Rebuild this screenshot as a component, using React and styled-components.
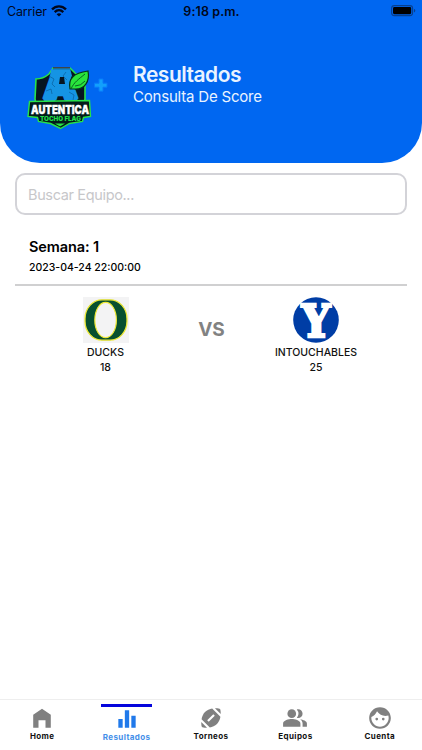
import React from 'react';
import styled, { createGlobalStyle } from 'styled-components';
import { MdEqualizer, MdFace, MdPeopleAlt, MdSportsFootball } from 'react-icons/md';

const tabs = [
  { name: 'Home', icon: HomeIcon },
  { name: 'Resultados', icon: MdEqualizer, active: true },
  { name: 'Torneos', icon: MdSportsFootball },
  { name: 'Equipos', icon: MdPeopleAlt },
  { name: 'Cuenta', icon: MdFace },
];

function HomeIcon({ size }) {
  return (
    <svg width={size} height={size} viewBox="0 0 26 26" fill="currentColor">
      <path d="M13 3.7l8.8 6v13.1h-5.3v-7.6H9.5v7.6H4.2V9.7z" />
    </svg>
  );
}

function WifiIcon() {
  return (
    <svg width="16" height="12" viewBox="0 0 16 12" fill="none" stroke="#00071c" strokeWidth="2.3">
      <path d="M1 4.4C5 .3 11 .3 15 4.4" />
      <path d="M3.7 7.1c2.5-2.5 6.1-2.5 8.6 0" />
      <path d="M8 11.6L5.6 9.2c1.4-1.3 3.4-1.3 4.8 0z" fill="#00071c" stroke="none" />
    </svg>
  );
}

function BatteryIcon() {
  return (
    <svg width="25" height="12" viewBox="0 0 25 12">
      <rect x=".6" y=".6" width="21" height="10" rx="2.8" fill="none" stroke="#07408f" strokeWidth="1.1" />
      <rect x="2" y="2" width="18.2" height="7.2" rx="1.4" fill="#000" />
      <path d="M23 4v3.4q1.3-.4 1.3-1.7T23 4z" fill="#07408f" />
    </svg>
  );
}

function LeagueLogo() {
  return (
    <svg width="105" height="85" viewBox="0 0 105 85">
      <path d="M21 24q7 0 13-5l4-6h17l5 5q6 5 10 6v20q-2 16-25 28-23-12-25-28z" fill="#061521" stroke="#27e34a" strokeWidth="1.6" />
      <text x="45.5" y="44" textAnchor="middle" textLength="33" lengthAdjust="spacingAndGlyphs" fontFamily="Inter, sans-serif" fontSize="39" fontWeight="900" fill="#1594e4" stroke="#1594e4" strokeWidth="5" strokeLinejoin="bevel">A</text>
      <path d="M36 14l19-1 2 8-4 5H38l-3-4z" fill="#1594e4" />
      <path d="M38 14h17M34 21l5 3-2 5 3 3M31 36l5-2 1 5M51 17l-3 4 4 4M54 37l5 3-1 5" fill="none" stroke="#0a5f9c" strokeWidth=".7" />
      <path d="M45 22h4l1 7h-6z" fill="#061521" />
      <path d="M38 12.7h17" stroke="#433744" strokeWidth="1.2" />
      <path d="M55 34c-2-10 3-16 18-18 2 10-3 19-14 18z" fill="#29e43c" stroke="#04351c" strokeWidth="1.2" />
      <path d="M56 34c3-7 8-10 14-15M60 31q6 0 10-5" fill="none" stroke="#04541f" strokeWidth=".9" />
      <path d="M14.500 46.500l60-1 1 16-7 1-1 4-13 2-9 5-10-5-12-2-1-4-9.500-1z" fill="#031b1b" stroke="#27e34a" strokeWidth="1.4" />
      <text x="45" y="59.3" textAnchor="middle" textLength="58" lengthAdjust="spacingAndGlyphs" fontFamily="Inter, sans-serif" fontSize="12" fontWeight="900" fill="#fff" stroke="#fff" strokeWidth=".35">AUTENTICA</text>
      <text x="45.5" y="66" textAnchor="middle" textLength="41" lengthAdjust="spacingAndGlyphs" fontFamily="Inter, sans-serif" fontSize="6.2" fontWeight="900" fill="#20dd47">TOCHO FLAG</text>
      <path d="M40 68.500h10l-5 3z" fill="#27e34a" />
      <path d="M84 24h4v4.200h4v4h-4v4h-4v-4h-4.500v-4H84z" fill="#12a0fc" stroke="#087afa" strokeWidth="1" />
    </svg>
  );
}

function DucksLogo() {
  return (
    <svg width="46" height="46" viewBox="0 0 46 46">
      <rect width="46" height="46" fill="#f3f3f4" />
      <rect x="2" y="2.8" width="42" height="40.4" rx="17" ry="19" fill="#07502f" stroke="#eee936" strokeWidth="1.3" />
      <ellipse cx="22.6" cy="23" rx="10.8" ry="17.7" fill="#f3f3f4" stroke="#eee936" strokeWidth="1.2" />
    </svg>
  );
}

function IntouchablesLogo() {
  return (
    <svg width="46" height="46" viewBox="0 0 46 46" overflow="visible">
      <circle cx="23" cy="23" r="22.8" fill="#003da5" />
      <text x="23" y="39.6" textAnchor="middle" textLength="29" lengthAdjust="spacingAndGlyphs" fontFamily="DejaVu Serif, serif" fontSize="45" fontWeight="700" fill="#fff" stroke="#fff" strokeWidth="2.6">Y</text>
    </svg>
  );
}

function App() {
  return (
    <Screen>
      <GlobalStyle />
      <Header>
        <StatusBar>
          <Carrier>
            Carrier <WifiIcon />
          </Carrier>
          <Clock>9:18 p.m.</Clock>
          <Battery>
            <BatteryIcon />
          </Battery>
        </StatusBar>
        <Brand>
          <LeagueLogo />
          <Heading>
            <Title>Resultados</Title>
            <Subtitle>Consulta De Score</Subtitle>
          </Heading>
        </Brand>
      </Header>
      <Content>
        <Search type="text" placeholder="Buscar Equipo..." />
        <Week>
          <WeekTitle>Semana: 1</WeekTitle>
          <WeekDate>2023-04-24 22:00:00</WeekDate>
        </Week>
        <Match>
          <Team>
            <DucksLogo />
            <TeamText>DUCKS</TeamText>
            <TeamText>18</TeamText>
          </Team>
          <Versus>VS</Versus>
          <Team>
            <IntouchablesLogo />
            <TeamText>INTOUCHABLES</TeamText>
            <TeamText>25</TeamText>
          </Team>
        </Match>
      </Content>
      <TabBar>
        {tabs.map(({ name, icon: Icon, active }) => (
          <Tab key={name} $active={active}>
            <Icon size={26} />
            <TabLabel $active={active}>{name}</TabLabel>
          </Tab>
        ))}
      </TabBar>
    </Screen>
  );
}

const GlobalStyle = createGlobalStyle`
  * {
    box-sizing: border-box;
  }

  body {
    margin: 0;
    background-color: #fff;
    font-family: Inter, "Liberation Sans", sans-serif;
  }
`;

const Screen = styled.div`
  display: flex;
  flex-direction: column;
  height: 750px;
  overflow: hidden;
  background-color: #fff;
`;

const Header = styled.header`
  flex: none;
  height: 163px;
  background-color: #0067f1;
  border-radius: 0 0 40px 40px;
`;

const StatusBar = styled.div`
  display: grid;
  grid-template-columns: 1fr auto 1fr;
  align-items: center;
  height: 22px;
  padding: 0 6px 0 7px;
  color: #00071c;
  font-size: 12.5px;
`;

const Carrier = styled.div`
  display: flex;
  align-items: center;
  gap: 4px;
  letter-spacing: -0.15px;
`;

const Clock = styled.div`
  font-weight: 600;
  letter-spacing: 0.1px;
`;

const Battery = styled.div`
  display: flex;
  justify-content: flex-end;
`;

const Brand = styled.div`
  display: flex;
  gap: 13px;
  padding: 33px 0 0 15px;
`;

const Heading = styled.div`
  padding-top: 7px;
  color: #e9f3ff;
`;

const Title = styled.h1`
  margin: 0;
  font-size: 21px;
  line-height: 25px;
  font-weight: 600;
  letter-spacing: -0.5px;
`;

const Subtitle = styled.div`
  font-size: 15px;
  line-height: 20px;
  letter-spacing: -0.2px;
`;

const Content = styled.main`
  flex: 1;
  padding: 10px 15px 0;
`;

const Search = styled.input`
  display: block;
  width: 100%;
  height: 42px;
  padding: 0 11px;
  border: 2px solid #d3d3d8;
  border-radius: 10px;
  background-color: #fff;
  font-family: inherit;
  font-size: 14.5px;
  letter-spacing: -0.35px;
  outline: none;

  &::placeholder {
    color: #c7c7ca;
    opacity: 1;
  }
`;

const Week = styled.div`
  height: 71px;
  padding: 23px 14px 0;
  border-bottom: 2px solid #d0d0d1;
  color: #000;
`;

const WeekTitle = styled.div`
  font-size: 14.5px;
  line-height: 18px;
  font-weight: 600;
  letter-spacing: -0.1px;
`;

const WeekDate = styled.div`
  margin-top: 5px;
  font-size: 10.5px;
  line-height: 14px;
  font-weight: 500;
`;

const Match = styled.div`
  display: grid;
  grid-template-columns: 181px 1fr 182px;
  padding-top: 11px;
`;

const Team = styled.div`
  display: flex;
  flex-direction: column;
  align-items: center;

  svg {
    margin-bottom: 2px;
  }
`;

const TeamText = styled.div`
  color: #111;
  font-size: 10.5px;
  line-height: 15px;
  font-weight: 550;
`;

const Versus = styled.div`
  padding: 21px 0 0 2px;
  color: #828282;
  font-size: 19px;
  line-height: 24px;
  font-weight: 700;
  text-align: center;
`;

const TabBar = styled.nav`
  display: flex;
  height: 51px;
  border-top: 1px solid #eee;
`;

const Tab = styled.div`
  flex: 1;
  display: flex;
  flex-direction: column;
  align-items: center;
  padding-top: 5px;
  color: ${props => (props.$active ? '#2079ea' : '#808080')};

  &::before {
    content: '';
    display: ${props => (props.$active ? 'block' : 'none')};
    width: 51px;
    height: 3px;
    margin-top: -1px;
    background-color: #0505dc;
  }

  svg {
    flex: none;
    margin-top: ${props => (props.$active ? '-1px' : '0')};
  }
`;

const TabLabel = styled.span`
  color: ${props => (props.$active ? '#448fe9' : '#111')};
  font-size: 8px;
  line-height: 10px;
  font-weight: 700;
  letter-spacing: 0.4px;
`;

export default App;
